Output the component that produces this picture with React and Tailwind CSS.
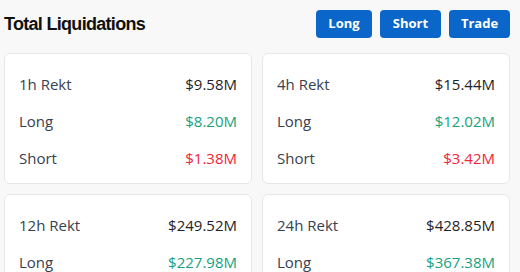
import React from "react";

const cards = [
  { label: "1h Rekt", total: "$9.58M", long: "$8.20M", short: "$1.38M" },
  { label: "4h Rekt", total: "$15.44M", long: "$12.02M", short: "$3.42M" },
  { label: "12h Rekt", total: "$249.52M", long: "$227.98M", short: "$21.54M" },
  { label: "24h Rekt", total: "$428.85M", long: "$367.38M", short: "$61.47M" },
];

function Row({ label, value, cls }) {
  return (
    <div className="flex h-[20px] items-center justify-between text-[15px]">
      <span className="text-[#374151]">{label}</span>
      <span className={cls}>{value}</span>
    </div>
  );
}

function Card({ c }) {
  return (
    <div className="flex h-[131px] flex-col gap-[17px] rounded-[6px] border border-[#e7e7e7] bg-white px-[14px] pt-[20px]">
      <Row label={c.label} value={c.total} cls="text-[#1f2328]" />
      <Row label="Long" value={c.long} cls="text-[#14a37f]" />
      <Row label="Short" value={c.short} cls="text-[#f2243a]" />
    </div>
  );
}

export default function App() {
  return (
    <div
      className="h-[272px] w-[520px] overflow-hidden bg-[#f8f8f8] pl-[4px] pr-[10px]"
      style={{ fontFamily: "'Open Sans', 'Liberation Sans', sans-serif" }}
    >
      <div className="flex h-[53px] items-start justify-between pt-[10px]">
        <h1
          className="mt-[2px] text-[18px] font-bold leading-[24px] tracking-[-0.7px] text-[#111]"
          style={{ fontFamily: "'Liberation Sans', Arial, sans-serif" }}
        >
          Total Liquidations
        </h1>
        <div className="flex gap-[8px]">
          {[
            ["Long", "w-[56px]"],
            ["Short", "w-[61px]"],
            ["Trade", "w-[61px]"],
          ].map(([t, w]) => (
            <button
              key={t}
              className={`${w} h-[28px] rounded-[4px] bg-[#0a66c8] text-[13px] font-bold text-white`}
            >
              {t}
            </button>
          ))}
        </div>
      </div>
      <div className="grid grid-cols-2 gap-x-[10px] gap-y-[10px]">
        {cards.map((c) => (
          <Card key={c.label} c={c} />
        ))}
      </div>
    </div>
  );
}
